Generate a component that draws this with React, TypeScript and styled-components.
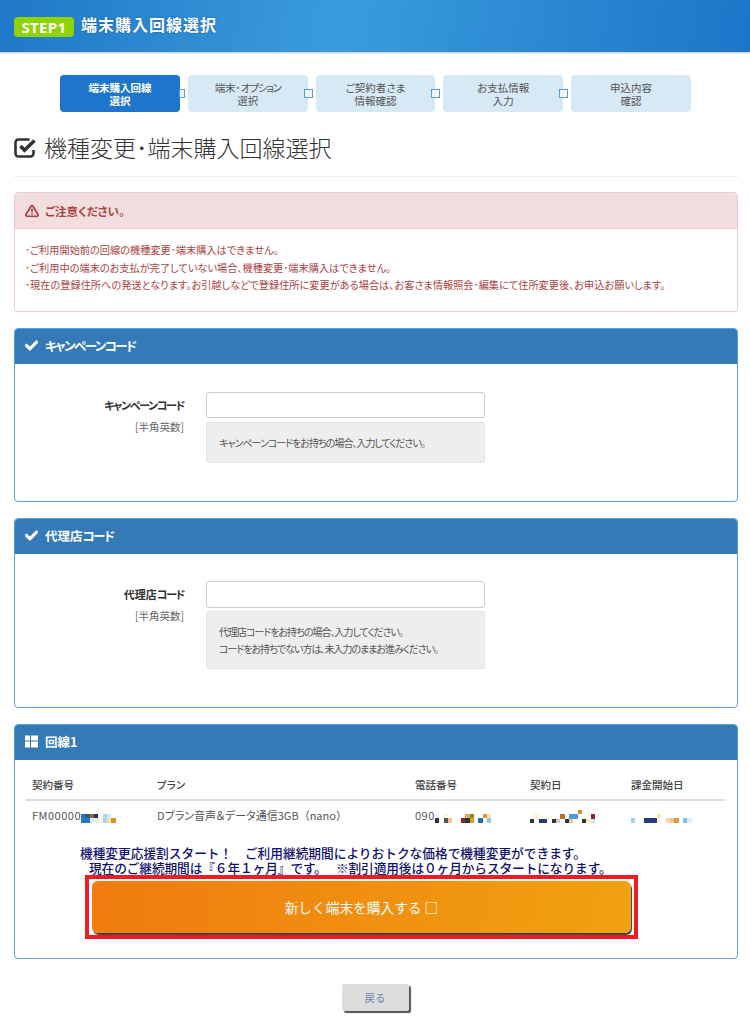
import React from 'react';
import styled, { createGlobalStyle } from 'styled-components';
import { FaCheck } from 'react-icons/fa';
import { FiAlertTriangle } from 'react-icons/fi';

const GlobalStyle = createGlobalStyle`
  html, body {
    margin: 0;
    padding: 0;
    background: #ffffff;
    font-family: 'Noto Sans CJK JP', 'Noto Sans', sans-serif;
    font-feature-settings: 'palt';
    color: #555555;
  }
`;

const Kana = styled.span`
  letter-spacing: -0.12em;
`;

const Plain = styled.span`
  font-feature-settings: normal;
`;

const Header = styled.header`
  height: 52px;
  box-sizing: border-box;
  padding: 17px 14px 0;
  display: flex;
  align-items: flex-start;
  gap: 7px;
  background: linear-gradient(100deg, #1f78c8 0%, #3a9cdc 45%, #1b76c9 100%);
  box-shadow: 0 1px 2px rgba(0, 0, 0, 0.25);
`;

const StepBadge = styled.span`
  width: 60px;
  height: 20px;
  border-radius: 4px;
  background: #8fd400;
  color: #ffffff;
  font-family: 'Open Sans', sans-serif;
  font-size: 15px;
  font-weight: 700;
  line-height: 20px;
  letter-spacing: 0.3px;
  text-align: center;
`;

const HeaderTitle = styled.h1`
  margin: -4px 0 0;
  color: #ffffff;
  font-size: 16px;
  font-weight: 700;
  line-height: 22px;
  letter-spacing: 1px;
  text-shadow: 0 0 2px rgba(10, 60, 120, 0.6);
`;

const Steps = styled.ol`
  list-style: none;
  margin: 23px 0 0 60px;
  padding: 0;
  width: 631px;
  display: grid;
  grid-template-columns: repeat(5, 1fr);
  gap: 8px;
`;

const Step = styled.li<{ $active?: boolean; $last?: boolean }>`
  position: relative;
  height: 37px;
  box-sizing: border-box;
  padding-top: 6px;
  border-radius: 4px;
  background: ${(p) => (p.$active ? '#1d76cc' : '#d7e9f4')};
  color: ${(p) => (p.$active ? '#ffffff' : '#555555')};
  font-size: 10.5px;
  font-weight: ${(p) => (p.$active ? 700 : 400)};
  line-height: 13px;
  text-align: center;

  &::after {
    content: '';
    display: ${(p) => (p.$last ? 'none' : 'block')};
    position: absolute;
    right: -5px;
    top: 14px;
    width: ${(p) => (p.$active ? 4 : 7)}px;
    height: 7px;
    border: 1px solid #5a9bd5;
    background: #eef6fc;
  }
`;

const PageHeading = styled.h2`
  margin: 0 12px 0 14px;
  height: 65px;
  box-sizing: border-box;
  padding-top: 18px;
  border-bottom: 1px solid #eeeeee;
  display: flex;
  align-items: flex-start;
  gap: 7px;
  color: #333333;
  font-size: 23px;
  font-weight: 300;
  line-height: 34px;
`;

const HeadingIcon = styled.svg`
  margin-top: 8px;
  flex: none;
`;

const Main = styled.main`
  margin: 15px 12px 0 14px;
  display: flex;
  flex-direction: column;
  gap: 16px;
`;

const AlertPanel = styled.section`
  height: 120px;
  box-sizing: border-box;
  border: 1px solid #ebccd1;
  border-radius: 4px;
  overflow: hidden;
`;

const AlertHead = styled.div`
  height: 36px;
  box-sizing: border-box;
  padding-left: 10px;
  border-bottom: 1px solid #ebccd1;
  background: #f2dede;
  color: #a94442;
  display: flex;
  align-items: center;
  gap: 6px;
  font-size: 11.5px;
  font-weight: 700;

  svg {
    width: 14px;
    height: 14px;
    stroke-width: 3;
  }
`;

const AlertBody = styled.div`
  padding: 12px 0 0 10px;
  color: #a94442;
  font-size: 10.2px;
  line-height: 17.5px;
  white-space: nowrap;
`;

const Panel = styled.section`
  border: 1px solid #5a9fe0;
  border-radius: 4px;
  overflow: hidden;
`;

const PanelHead = styled.div`
  height: 35px;
  box-sizing: border-box;
  padding: 0 0 2px 10px;
  background: #337ab7;
  color: #ffffff;
  display: flex;
  align-items: center;
  gap: 7px;
  font-size: 12.5px;
  font-weight: 700;

  > svg {
    width: 13px;
    height: 13px;
    flex: none;
  }
`;

const CheckIcon = styled(FaCheck)`
  stroke: currentColor;
  stroke-width: 30;
`;

const FormRow = styled.div<{ $top: number }>`
  padding: ${(p) => p.$top}px 0 38px;
  display: grid;
  grid-template-columns: 169px 278.5px;
  column-gap: 22px;
`;

const FieldLabel = styled.div`
  padding-top: 5px;
  text-align: right;
`;

const LabelName = styled.div`
  color: #333333;
  font-size: 11px;
  font-weight: 700;
  line-height: 16px;
`;

const LabelNote = styled.div`
  margin-top: 6px;
  color: #666666;
  font-size: 10.5px;
  line-height: 16px;
`;

const TextInput = styled.input<{ $tall?: boolean }>`
  display: block;
  width: 100%;
  height: ${(p) => (p.$tall ? 27 : 26)}px;
  margin: 0 0 ${(p) => (p.$tall ? 3 : 4)}px;
  box-sizing: border-box;
  border: 1px solid #cccccc;
  border-radius: 3px;
  background: #ffffff;
`;

const HelpBox = styled.div`
  padding: 11px 12px;
  border: 1px solid #e3e3e3;
  border-radius: 3px;
  background: #eeeeee;
  color: #555555;
  font-size: 10px;
  line-height: 17px;
  letter-spacing: -1px;
`;

const LineBody = styled.div`
  padding: 0 12px 19px 11px;
`;

const LineTable = styled.table`
  width: 699px;
  table-layout: fixed;
  border-collapse: collapse;
`;

const HeadCell = styled.th<{ $width: number }>`
  width: ${(p) => p.$width}px;
  height: 40px;
  box-sizing: border-box;
  padding: 10px 0 0 6px;
  border-bottom: 2px solid #dddddd;
  color: #444444;
  font-size: 10.5px;
  font-weight: 500;
  text-align: left;
`;

const BodyCell = styled.td`
  height: 29px;
  box-sizing: border-box;
  padding: 0 0 0 6px;
  color: #555555;
  font-size: 11px;
  white-space: nowrap;
`;

const Digits = styled.span`
  letter-spacing: 0.5px;
`;

const MosaicSvg = styled.svg`
  vertical-align: -3px;
`;

const Promo = styled.div`
  margin: 16px 0 0 54px;
  color: #10106e;
  font-feature-settings: normal;
  font-size: 12.7px;
  font-weight: 500;
  line-height: 15px;
  white-space: nowrap;
`;

const PromoIndent = styled.div`
  padding-left: 9px;
  letter-spacing: -0.1px;
`;

const PurchaseFrame = styled.div`
  margin: 0 0 0 59px;
  width: 553px;
  height: 64px;
  box-sizing: border-box;
  padding: 2px 0 0 3px;
  border: 4px solid #ed1c24;
`;

const PurchaseButton = styled.button`
  display: block;
  width: 539px;
  height: 52px;
  border: 0;
  border-radius: 6px;
  background: linear-gradient(100deg, #f07b10 0%, #f0a210 100%);
  box-shadow: 1px 2px 1px #3a3a3a;
  color: #ffffff;
  font-family: inherit;
  font-feature-settings: normal;
  font-size: 13.7px;
`;

const BackRow = styled.div`
  padding: 25px 0 7px;
  display: flex;
  justify-content: center;
`;

const BackButton = styled.button`
  width: 67px;
  height: 27px;
  border: 0;
  border-radius: 2px;
  background: #dddddd;
  box-shadow: 2px 2px 1px #555555;
  color: #6d86a8;
  font-family: inherit;
  font-size: 10.5px;
`;

type Cell = [number, number, string];

// redacted digits in the screenshot, drawn as a coarse pixel grid
const Mosaic = ({ cols, rows, cells }: { cols: number; rows: number; cells: Cell[] }) => {
  const size = 4.33;
  return (
    <MosaicSvg width={cols * size} height={rows * size} viewBox={`0 0 ${cols} ${rows}`} shapeRendering="crispEdges">
      {cells.map(([x, y, c]) => (
        <rect key={`${x}-${y}`} x={x} y={y} width={1} height={1} fill={c} />
      ))}
    </MosaicSvg>
  );
};

const fmCells: Cell[] = [
  [0, 0, '#2a78c0'], [0, 1, '#2a78c0'], [1, 0, '#2a5a90'], [1, 1, '#2a78c0'],
  [2, 0, '#8a6a30'], [3, 0, '#2a2a60'], [2, 1, '#d8f0e8'], [3, 1, '#e8f4f0'],
  [4, 1, '#f4f4d8'], [5, 0, '#a8d4f8'], [5, 1, '#a8d4f8'], [6, 0, '#cfe8fb'],
  [6, 1, '#f5e0b0'], [7, 1, '#d89030'],
];

const phoneCells: Cell[] = [
  [0, 0, '#e4f8fb'], [0, 1, '#333333'], [2, 0, '#fbf6e0'], [2, 1, '#555555'], [3, 1, '#f5c28a'],
  [6, 1, '#8a2b2b'], [7, 1, '#333333'], [7, 0, '#e0a860'], [8, 0, '#7f8f20'], [8, 1, '#e09a30'],
  [10, 1, '#2a6ab0'], [11, 0, '#e09a30'], [12, 0, '#f5e0c0'], [12, 1, '#8cc8f5'],
];

const dateCells: Cell[] = [
  [1, 1, '#fbf6d8'], [0, 2, '#333333'], [2, 2, '#2a3a70'], [3, 2, '#2a3a70'], [5, 2, '#333333'],
  [6, 2, '#cccccc'], [7, 1, '#b87030'], [8, 2, '#333333'], [9, 2, '#f5c28a'], [9, 1, '#4a9ae0'],
  [10, 1, '#4a9ae0'], [11, 0, '#d89030'], [12, 2, '#333333'], [13, 2, '#f8eebc'], [14, 1, '#8a2b2b'],
  [14, 2, '#cce6fa'],
];

const billingCells: Cell[] = [
  [0, 1, '#9cd0f8'], [3, 1, '#2a3a80'], [4, 1, '#2a3a80'], [5, 1, '#2a3a80'], [6, 0, '#fbe8b8'],
  [6, 1, '#fdf4dc'], [8, 1, '#fbd8a8'], [9, 1, '#f5c28a'], [10, 1, '#d89a40'], [12, 1, '#7cc0f5'],
  [13, 1, '#e0f2fc'],
];

const steps: [React.ReactNode, string][] = [
  ['端末購入回線', '選択'],
  [<>端末･<Kana>オプション</Kana></>, '選択'],
  ['ご契約者さま', '情報確認'],
  ['お支払情報', '入力'],
  ['申込内容', '確認'],
];

const columns: [string, number][] = [
  ['契約番号', 125],
  ['プラン', 258],
  ['電話番号', 115],
  ['契約日', 101],
  ['課金開始日', 100],
];

const CheckSquareIcon = () => (
  <HeadingIcon width="23" height="20" viewBox="0 0 23 20" fill="none" stroke="#333333">
    <path d="M19.5 12v3.5a3 3 0 0 1-3 3h-12a3 3 0 0 1-3-3v-11a3 3 0 0 1 3-3h11" strokeWidth="2.6" />
    <path d="M6.5 8l4 4.2L20.5 2.5" strokeWidth="3.6" />
  </HeadingIcon>
);

const GridIcon = () => (
  <svg viewBox="0 0 13 12" fill="#ffffff">
    <rect x="0" y="0" width="5" height="5" />
    <rect x="6" y="0" width="7" height="5" />
    <rect x="0" y="6" width="5" height="6" />
    <rect x="6" y="6" width="7" height="6" />
  </svg>
);

const App = () => {
  return (
    <>
      <GlobalStyle />
      <Header>
        <StepBadge>STEP1</StepBadge>
        <HeaderTitle>端末購入回線選択</HeaderTitle>
      </Header>

      <Steps>
        {steps.map(([a, b], i) => (
          <Step key={i} $active={i === 0} $last={i === steps.length - 1}>
            {a}
            <br />
            {b}
          </Step>
        ))}
      </Steps>

      <PageHeading>
        <CheckSquareIcon />
        機種変更･端末購入回線選択
      </PageHeading>

      <Main>
        <AlertPanel>
          <AlertHead>
            <FiAlertTriangle />
            ご注意ください。
          </AlertHead>
          <AlertBody>
            ･ご利用開始前の回線の機種変更･端末購入はできません。
            <br />
            ･ご利用中の端末のお支払が完了していない場合、機種変更･端末購入はできません。
            <br />
            ･現在の登録住所への発送となります。お引越しなどで登録住所に変更がある場合は、お客さま情報照会･編集にて住所変更後、お申込お願いします。
          </AlertBody>
        </AlertPanel>

        <Panel>
          <PanelHead>
            <CheckIcon />
            <Kana>キャンペーンコード</Kana>
          </PanelHead>
          <FormRow $top={28}>
            <FieldLabel>
              <LabelName>
                <Kana>キャンペーンコード</Kana>
              </LabelName>
              <LabelNote>[半角英数]</LabelNote>
            </FieldLabel>
            <div>
              <TextInput type="text" />
              <HelpBox>キャンペーンコードをお持ちの場合、入力してください。</HelpBox>
            </div>
          </FormRow>
        </Panel>

        <Panel>
          <PanelHead>
            <CheckIcon />
            <span>
              代理店<Kana>コード</Kana>
            </span>
          </PanelHead>
          <FormRow $top={27}>
            <FieldLabel>
              <LabelName>
                代理店<Kana>コード</Kana>
              </LabelName>
              <LabelNote>[半角英数]</LabelNote>
            </FieldLabel>
            <div>
              <TextInput type="text" $tall />
              <HelpBox>
                代理店コードをお持ちの場合、入力してください。
                <br />
                コードをお持ちでない方は、未入力のままお進みください。
              </HelpBox>
            </div>
          </FormRow>
        </Panel>

        <Panel>
          <PanelHead>
            <GridIcon />
            回線1
          </PanelHead>
          <LineBody>
            <LineTable>
              <thead>
                <tr>
                  {columns.map(([name, width]) => (
                    <HeadCell key={name} $width={width}>
                      {name}
                    </HeadCell>
                  ))}
                </tr>
              </thead>
              <tbody>
                <tr>
                  <BodyCell>
                    <Digits>FM00000</Digits>
                    <Mosaic cols={8} rows={2} cells={fmCells} />
                  </BodyCell>
                  <BodyCell>
                    Dプラン音声＆データ通信3GB<Plain>（nano）</Plain>
                  </BodyCell>
                  <BodyCell>
                    <Digits>090</Digits>
                    <Mosaic cols={13} rows={2} cells={phoneCells} />
                  </BodyCell>
                  <BodyCell>
                    <Mosaic cols={15} rows={3} cells={dateCells} />
                  </BodyCell>
                  <BodyCell>
                    <Mosaic cols={14} rows={2} cells={billingCells} />
                  </BodyCell>
                </tr>
              </tbody>
            </LineTable>
            <Promo>
              機種変更応援割スタート！　ご利用継続期間によりおトクな価格で機種変更ができます。
              <PromoIndent>現在のご継続期間は『６年１ヶ月』です。　 ※割引適用後は０ヶ月からスタートになります。</PromoIndent>
            </Promo>
            <PurchaseFrame>
              <PurchaseButton type="button">新しく端末を購入する □</PurchaseButton>
            </PurchaseFrame>
          </LineBody>
        </Panel>
      </Main>

      <BackRow>
        <BackButton type="button">戻る</BackButton>
      </BackRow>
    </>
  );
};

export default App;
